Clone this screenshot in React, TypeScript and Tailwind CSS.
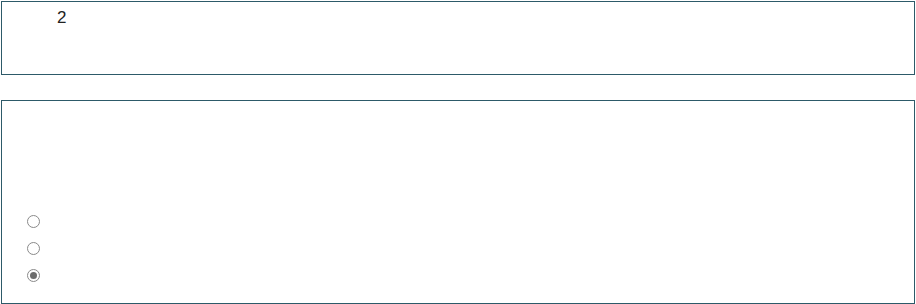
import React from "react";

function Radio({ checked }: { checked?: boolean }) {
  return (
    <div className="w-[13px] h-[13px] rounded-full border border-[#8a8a8a] bg-white flex items-center justify-center">
      {checked && <div className="w-[7px] h-[7px] rounded-full bg-[#6e6e6e]" />}
    </div>
  );
}

export default function App() {
  return (
    <div className="bg-white w-[916px] h-[304px] pt-[1px] pl-[1px] font-['Liberation_Sans',Arial,sans-serif] text-[#222]">
      <div className="w-[914px] h-[74px] border border-[#2d5a69] pt-[6px] pl-[55px] text-[17px] leading-[19px]">
        2
      </div>
      <div className="mt-[25px] w-[914px] h-[204px] border border-[#2d5a69] pt-[114px] pl-[25px] flex flex-col gap-[14px]">
        <Radio />
        <Radio />
        <Radio checked />
      </div>
    </div>
  );
}
